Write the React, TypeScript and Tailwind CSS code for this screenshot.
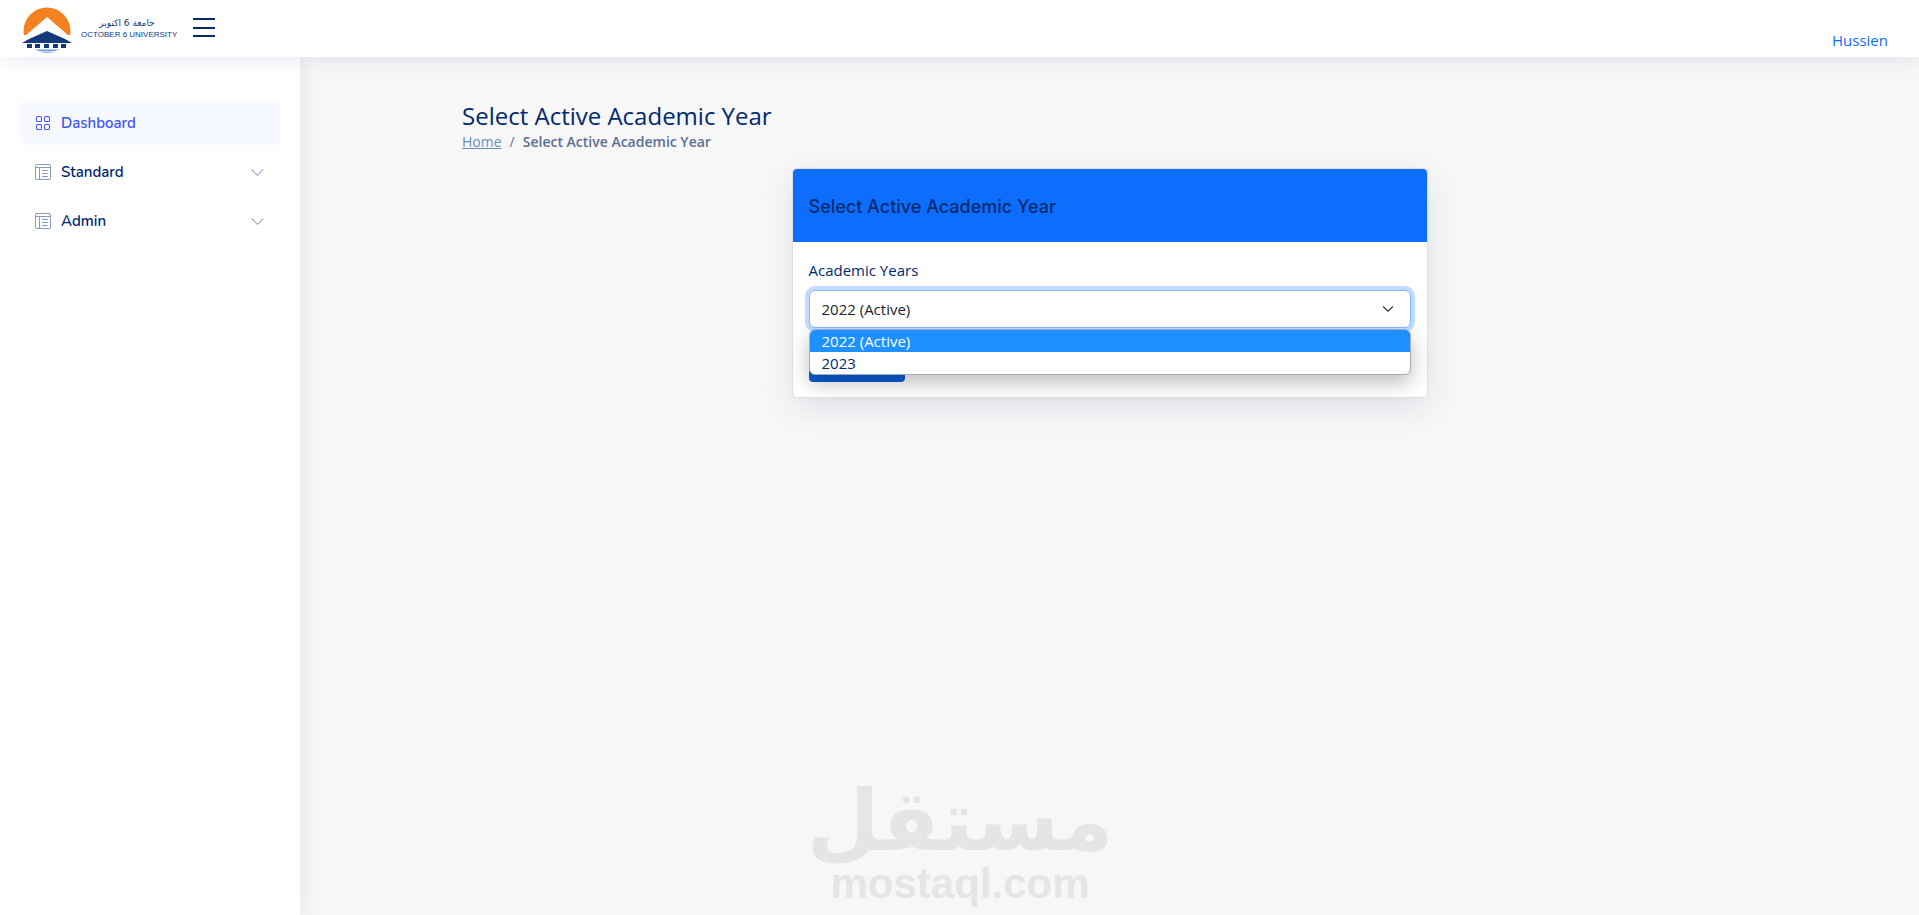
import { BsGrid, BsLayoutTextWindowReverse, BsChevronDown } from "react-icons/bs";

function Logo() {
  return (
    <svg width="54" height="50" viewBox="0 0 54 50" className="shrink-0">
      <defs>
        <clipPath id="sun"><rect x="0" y="0" width="54" height="32" /></clipPath>
      </defs>
      <circle cx="27" cy="28" r="23.5" fill="#f58220" clipPath="url(#sun)" />
      <path d="M27 14 L49 33 L51 37 L3 37 L5 33 Z" fill="#fff" />
      <path d="M27 28 L45 36 L52 40 L2 40 L9 36 Z" fill="#123a7a" />
      <rect x="7" y="41" width="5" height="4" fill="#123a7a" />
      <rect x="15" y="41" width="5" height="4" fill="#123a7a" />
      <rect x="24" y="41" width="5" height="4" fill="#123a7a" />
      <rect x="33" y="41" width="5" height="4" fill="#123a7a" />
      <rect x="41" y="41" width="5" height="4" fill="#123a7a" />
      <path d="M15 46.5 H39 L35 48 H19 Z" fill="#6f9bd1" />
      <path d="M19 48.5 H35 L30 50 H24 Z" fill="#9dbde0" />
    </svg>
  );
}

function NavItem({ label, active, children }: { label: string; active?: boolean; children: React.ReactNode }) {
  return (
    <div className={`flex h-[44px] items-center rounded px-[15px] text-[15px] font-semibold ${active ? "bg-[#f6f9ff] text-[#4154f1]" : "text-[#012970]"}`}>
      <span className={`mr-[10px] flex w-[16px] ${active ? "text-[#4154f1]" : "text-[#899bbd]"}`}>{children}</span>
      <span>{label}</span>
      {!active && <BsChevronDown className="ml-auto text-[#899bbd]" size={15} />}
    </div>
  );
}

export default function App() {
  return (
    <div className="relative flex h-[915px] w-full flex-col overflow-hidden bg-[#f7f7f7] font-['Nunito','Open_Sans',sans-serif] text-[#012970]">
      <header className="relative z-20 flex h-[57px] shrink-0 items-start bg-white pl-[20px] shadow-[0_2px_20px_rgba(1,41,112,0.1)]">
        <div className="mt-[3px] flex items-start">
          <Logo />
          <div className="ml-[7px] mt-[14px] flex w-[92px] flex-col text-[#123a7a]">
            <span dir="rtl" className="h-[12px] text-center font-['DejaVu_Sans',sans-serif] text-[9px] leading-[12px] tracking-[1px]">جامعة 6 اكتوبر</span>
            <span className="whitespace-nowrap font-['Liberation_Sans',sans-serif] text-[8px] leading-[12px]">OCTOBER 6 UNIVERSITY</span>
          </div>
          <div className="ml-[20px] mt-[15px] flex h-[19px] w-[22px] flex-col justify-between">
            <span className="h-[2px] bg-[#012970]" />
            <span className="h-[2px] bg-[#012970]" />
            <span className="h-[2px] bg-[#012970]" />
          </div>
        </div>
        <span className="ml-auto mr-[31px] mt-[28px] font-['Open_Sans',sans-serif] text-[15px] leading-[24px] text-[#0d6efd]">Hussien</span>
      </header>

      <div className="flex min-h-0 flex-1">
        <aside className="z-10 flex w-[300px] shrink-0 flex-col gap-[5px] bg-white px-[20px] pt-[44px] shadow-[0_0_20px_rgba(1,41,112,0.1)]">
          <NavItem label="Dashboard" active><BsGrid size={16} /></NavItem>
          <NavItem label="Standard"><BsLayoutTextWindowReverse size={16} /></NavItem>
          <NavItem label="Admin"><BsLayoutTextWindowReverse size={16} /></NavItem>
        </aside>

        <main className="min-w-0 flex-1 pt-[44px]">
          <div className="pl-[162px]">
            <h1 className="font-['Open_Sans',sans-serif] text-[24px] font-medium leading-[29px]">Select Active Academic Year</h1>
            <div className="mt-[1px] flex font-['Open_Sans',sans-serif] text-[14px] font-semibold leading-[21px] text-[#5c6f92]">
              <span className="font-normal text-[#6c8ebf] underline">Home</span>
              <span className="mx-[8px] font-normal">/</span>
              <span>Select Active Academic Year</span>
            </div>
          </div>

          <section className="mx-auto mt-[16px] h-[230px] w-[636px] rounded-[5px] border border-[#dfdfdf] bg-white shadow-[0_10px_30px_rgba(1,41,112,0.1)]">
            <div className="flex h-[73px] items-center rounded-t-[4px] bg-[#0d6efd] px-[16px] pt-[2px] font-['Inter',sans-serif] text-[18px] font-medium leading-[22px]">
              Select Active Academic Year
            </div>
            <div className="relative px-[16px] pt-[16px]">
              <label className="block font-['Open_Sans',sans-serif] text-[15px] leading-[24px]">Academic Years</label>
              <div className="mt-[8px] flex h-[38px] items-center rounded-[6px] border border-[#86b7fe] bg-white pl-[12px] pr-[16px] font-['Open_Sans',sans-serif] text-[15px] text-[#212529] shadow-[0_0_0_4px_rgba(13,110,253,0.25)]">
                <span>2022 (Active)</span>
                <BsChevronDown className="ml-auto text-[#343a40]" size={12} strokeWidth={1} />
              </div>
              <div className="mt-[16px] h-[38px] w-[96px] rounded-[4px] bg-[#0b5ed7]" />
              <div className="absolute left-[16px] top-[87px] z-10 w-[602px] overflow-hidden rounded-[6px] border border-[#a3acbd] bg-white font-['Open_Sans',sans-serif] text-[15px] leading-[22px] text-[#012970] shadow-[0_8px_20px_rgba(0,0,0,0.25)]">
                <div className="h-[22px] bg-[#1e90ff] pl-[12px] text-white">2022 (Active)</div>
                <div className="h-[22px] pl-[12px]">2023</div>
              </div>
            </div>
          </section>
        </main>
      </div>

      <div className="absolute left-[843px] top-[780px] flex w-[234px] flex-col items-center text-[#e5e5e5]">
        <span dir="rtl" className="h-[82px] whitespace-nowrap font-['DejaVu_Sans',sans-serif] text-[84px] font-bold leading-[82px]">مستقل</span>
        <span className="font-['Liberation_Sans',sans-serif] text-[42px] font-bold leading-[44px]">mostaql.com</span>
      </div>
    </div>
  );
}
